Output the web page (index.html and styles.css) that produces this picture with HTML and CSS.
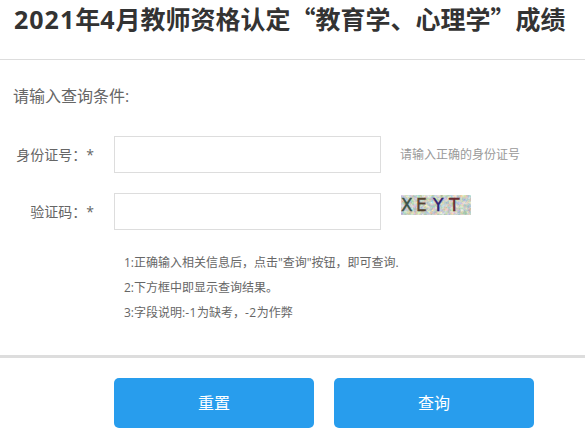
FILE: index.html
```
<!DOCTYPE html>
<html lang="zh-CN">
<head>
    <meta charset="UTF-8">
    <meta name="viewport" content="width=device-width, initial-scale=1.0">
    <title>成绩查询</title>
    <link rel="stylesheet" href="styles.css">
</head>
<body>

    <!-- Header -->
    <div class="header">
        <h1><span class="num">2021</span>年<span class="num">4</span>月教师资格认定<span class="quote">“</span>教育学、心理学<span class="quote">”</span>成绩</h1>
    </div>

    <!-- Query Form -->
    <form class="query" id="queryForm">
        <p class="query-title">请输入查询条件:</p>

        <div class="row">
            <label for="idcard">身份证号：<span class="star">*</span></label>
            <input type="text" id="idcard" name="idcard">
            <span class="hint">请输入正确的身份证号</span>
        </div>

        <div class="row">
            <label for="code">验证码：<span class="star">*</span></label>
            <input type="text" id="code" name="code">
            <svg class="captcha" width="70" height="20" viewBox="0 0 70 20">
                <filter id="noise" x="0" y="0" width="100%" height="100%" color-interpolation-filters="sRGB">
                    <feTurbulence type="fractalNoise" baseFrequency="0.3" numOctaves="3" seed="7"/>
                    <feColorMatrix values="0.6 0 0 0 0.49  0.15 0.4 0 0 0.54  0 0.1 0.5 0 0.48  0 0 0 0 1"/>
                </filter>
                <rect width="70" height="20" fill="#c8cfc9" filter="url(#noise)"/>
                <text x="0" y="16" fill="#3d5348" stroke="#3d5348">X</text>
                <text x="15" y="16" fill="#57432f" stroke="#57432f">E</text>
                <text x="32" y="16" fill="#2f2372" stroke="#2f2372">Y</text>
                <text x="48" y="16" fill="#6b2b32" stroke="#6b2b32">T</text>
            </svg>
        </div>

        <div class="tips">
            <p>1:正确输入相关信息后，点击"查询"按钮，即可查询.</p>
            <p>2:下方框中即显示查询结果。</p>
            <p>3:字段说明:<span class="mark">-1</span>为缺考，<span class="mark">-2</span>为作弊</p>
        </div>

        <div class="buttons">
            <button type="reset">重置</button>
            <button type="button">查询</button>
        </div>
    </form>

</body>
</html>
```
FILE: styles.css
```
/* General Reset */
* {
    margin: 0;
    padding: 0;
    box-sizing: border-box;
}

body {
    font-family: "Open Sans", "Noto Sans CJK SC", sans-serif;
    background: #fff;
    color: #666;
    overflow: hidden;
}

/* Header Section */
.header {
    height: 60px;
    padding-left: 14px;
    border-bottom: 1px solid #ddd;
}

.header h1 {
    font-size: 25px;
    font-weight: bold;
    line-height: 36px;
    color: #333;
    white-space: nowrap;
}

.header .num {
    letter-spacing: 1px;
}

.header .quote {
    font-family: "Noto Sans CJK SC", sans-serif;
}

/* Query Form */
.query-title {
    padding: 24px 0 0 13px;
    height: 76px;
    font-size: 16px;
    line-height: 24px;
}

.row {
    display: flex;
    align-items: center;
    height: 37px;
    margin-bottom: 20px;
}

.row label {
    width: 94px;
    margin-right: 20px;
    padding-bottom: 2px;
    font-size: 14px;
    text-align: right;
    white-space: nowrap;
}

.row input {
    width: 267px;
    height: 37px;
    padding: 0 10px;
    border: 1px solid #ddd;
    font-size: 14px;
}

.hint {
    margin-left: 19px;
    padding-bottom: 2px;
    font-size: 12px;
    color: #999;
}

.captcha {
    margin: 0 0 14px 20px;
}

.captcha text {
    font-family: "DejaVu Sans", sans-serif;
    font-size: 17px;
    stroke-width: 0.4px;
}

.tips {
    height: 105px;
    padding-left: 124px;
    font-size: 12px;
    line-height: 25px;
}

.tips .mark {
    letter-spacing: 0.5px;
}

/* Buttons */
.buttons {
    display: flex;
    gap: 20px;
    padding: 20px 0 10px 114px;
    border-top: 3px solid #ddd;
}

.buttons button {
    width: 200px;
    height: 50px;
    padding-bottom: 2px;
    border: none;
    border-radius: 5px;
    background-color: #289ded;
    color: #fff;
    font-family: inherit;
    font-size: 16px;
    cursor: pointer;
}
```
